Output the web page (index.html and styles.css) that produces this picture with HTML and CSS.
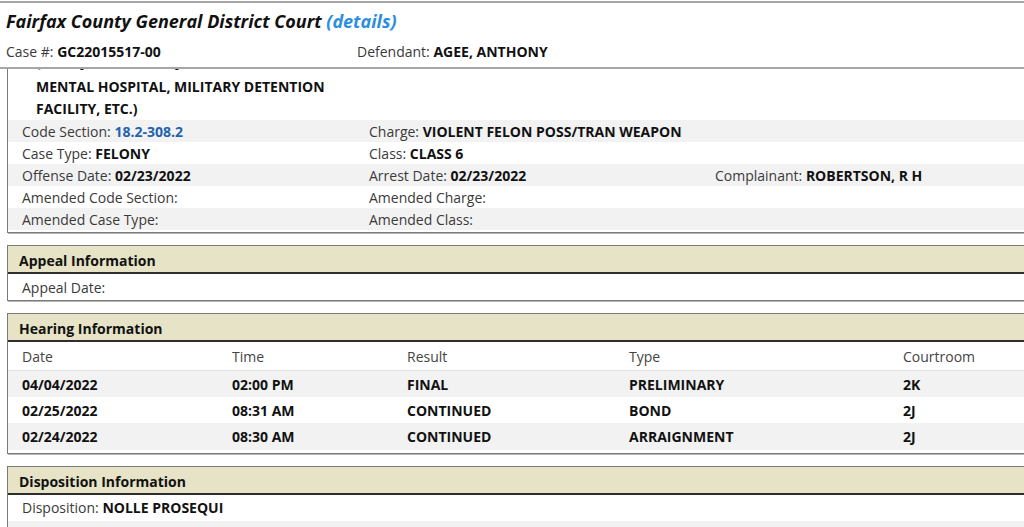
FILE: index.html
```html
<!DOCTYPE html>
<html lang="en">

<head>
    <meta charset="UTF-8">
    <meta name="viewport" content="width=device-width, initial-scale=1.0">
    <title>Case Details</title>
    <link rel="stylesheet" href="styles.css">
</head>

<body>
    <div class="case_head">
        <h1 class="court">Fairfax County General District Court <a href="javascript:;" class="details">(details)</a></h1>
        <div class="case_meta">
            <span class="meta_item">Case #: <b>GC22015517-00</b></span>
            <span class="meta_item">Defendant: <b>AGEE, ANTHONY</b></span>
        </div>
    </div>

    <div class="scroll">
        <!-- charge -->
        <div class="box charge_box">
            <div class="charge_desc">
                <div class="desc_cut">(INCL. JAIL, PRISON, JUVENILE FACILITY,</div>
                <div>MENTAL HOSPITAL, MILITARY DETENTION</div>
                <div>FACILITY, ETC.)</div>
            </div>
            <table class="grid">
                <tr>
                    <td>Code Section: <a href="javascript:;" class="code">18.2-308.2</a></td>
                    <td>Charge: <b>VIOLENT FELON POSS/TRAN WEAPON</b></td>
                    <td></td>
                </tr>
                <tr>
                    <td>Case Type: <b>FELONY</b></td>
                    <td>Class: <b>CLASS 6</b></td>
                    <td></td>
                </tr>
                <tr>
                    <td>Offense Date: <b>02/23/2022</b></td>
                    <td>Arrest Date: <b>02/23/2022</b></td>
                    <td>Complainant: <b>ROBERTSON, R H</b></td>
                </tr>
                <tr>
                    <td>Amended Code Section:</td>
                    <td>Amended Charge:</td>
                    <td></td>
                </tr>
                <tr>
                    <td>Amended Case Type:</td>
                    <td>Amended Class:</td>
                    <td></td>
                </tr>
            </table>
        </div>

        <!-- appeal -->
        <div class="box">
            <div class="box_title">Appeal Information</div>
            <table class="grid rows_tall">
                <tr>
                    <td>Appeal Date:</td>
                </tr>
            </table>
        </div>

        <!-- hearing -->
        <div class="box hearing_box">
            <div class="box_title">Hearing Information</div>
            <table class="grid rows_tall hearing">
                <thead>
                    <tr>
                        <th>Date</th>
                        <th>Time</th>
                        <th>Result</th>
                        <th>Type</th>
                        <th>Courtroom</th>
                    </tr>
                </thead>
                <tbody id="hearings"></tbody>
            </table>
        </div>

        <!-- disposition -->
        <div class="box">
            <div class="box_title">Disposition Information</div>
            <table class="grid rows_tall dispo">
                <tr>
                    <td colspan="2">Disposition: <b>NOLLE PROSEQUI</b></td>
                </tr>
                <tr>
                    <td>Sentence Time:</td>
                    <td>Sentence Suspended:</td>
                </tr>
                <tr>
                    <td>Probation Type:</td>
                    <td>Probation Time:</td>
                </tr>
            </table>
        </div>
    </div>

    <script>
        // hearing rows
        let hearings = [
            { date: '04/04/2022', time: '02:00 PM', result: 'FINAL', type: 'PRELIMINARY', room: '2K' },
            { date: '02/25/2022', time: '08:31 AM', result: 'CONTINUED', type: 'BOND', room: '2J' },
            { date: '02/24/2022', time: '08:30 AM', result: 'CONTINUED', type: 'ARRAIGNMENT', room: '2J' }
        ];

        function render(data) {
            let tbody = document.querySelector("#hearings");
            tbody.innerHTML = "";
            data.forEach(item => {
                let tr = document.createElement("tr");
                tr.innerHTML = `<td><b>${item.date}</b></td>
                            <td><b>${item.time}</b></td>
                            <td><b>${item.result}</b></td>
                            <td><b>${item.type}</b></td>
                            <td><b>${item.room}</b></td>`;
                tbody.appendChild(tr);
            })
        }
        render(hearings);
    </script>
</body>

</html>
```

FILE: styles.css
```css
* {
    margin: 0;
    padding: 0;
    box-sizing: border-box;
}

html,
body {
    height: 100%;
    overflow: hidden;
}

body {
    font-family: "Open Sans", "Noto Sans", "Liberation Sans", sans-serif;
    font-size: 14px;
    color: #3a3a3a;
    background: #fff;
}

body a {
    text-decoration: none;
}

b {
    color: #111;
    font-weight: 700;
}

/* top header */
.case_head {
    margin-top: 1px;
    border-top: 2px solid #a6a6a6;
    border-bottom: 2px solid #a6a6a6;
    padding: 5px 6px 4px;
}

.court {
    font-size: 18px;
    line-height: 26px;
    font-style: italic;
    font-weight: 700;
    color: #111;
}

.court .details {
    color: #2b8ee0;
}

.case_meta {
    display: flex;
    margin-top: 6px;
    line-height: 22px;
    padding-top: 1px;
}

.meta_item:first-child {
    width: 351px;
}

/* scrolled content */
.scroll {
    height: calc(100% - 68px);
    overflow: hidden;
}

.box {
    width: 1060px;
    margin: 0 0 12px 7px;
    border: 1px solid #7a7a7a;
    box-shadow: 1px 1px 0 #b5b5b5;
}

.charge_box {
    margin-top: -15px;
    border-top: 0;
    padding-bottom: 2px;
}

.charge_desc {
    padding-left: 28px;
    line-height: 22px;
    font-weight: 700;
    color: #111;
}

.charge_desc .desc_cut {
    height: 22px;
    line-height: 15px;
}

.box_title {
    height: 28px;
    line-height: 26px;
    padding: 2px 0 0 11px;
    background: #e6e3c6;
    border-bottom: 2px solid #2e2e2e;
    font-weight: 700;
    color: #111;
}

.grid {
    width: 100%;
    border-collapse: collapse;
}

.grid td,
.grid th {
    height: 22px;
    padding: 0 0 0 14px;
    text-align: left;
    font-weight: 400;
    white-space: nowrap;
}

.grid tr:nth-child(odd) td {
    background: #f2f2f2;
}

.grid td:nth-child(1) {
    width: 347px;
}

.grid td:nth-child(2) {
    width: 346px;
}

.grid .code {
    color: #2262ad;
    font-weight: 700;
}

.rows_tall td,
.rows_tall th {
    height: 26px;
}

.rows_tall tr:nth-child(odd) td {
    background: #fff;
}

.rows_tall tr:nth-child(even) td {
    background: #f2f2f2;
}

/* hearing table */
.hearing_box {
    padding-bottom: 3px;
}

.hearing th {
    height: 28px;
    padding-top: 2px;
    color: #444;
    border-bottom: 1px solid #e2e2e2;
}

.hearing td {
    height: 26.5px;
    padding-top: 1px;
}

.hearing tbody tr:nth-child(odd) td {
    background: #f2f2f2;
}

.hearing tbody tr:nth-child(even) td {
    background: #fff;
}

.hearing th:nth-child(1),
.hearing td:nth-child(1) {
    width: 210px;
}

.hearing th:nth-child(2),
.hearing td:nth-child(2) {
    width: 175px;
}

.hearing th:nth-child(3),
.hearing td:nth-child(3) {
    width: 222px;
}

.hearing th:nth-child(4),
.hearing td:nth-child(4) {
    width: 274px;
}

.dispo td:nth-child(1) {
    width: 462px;
}
```
